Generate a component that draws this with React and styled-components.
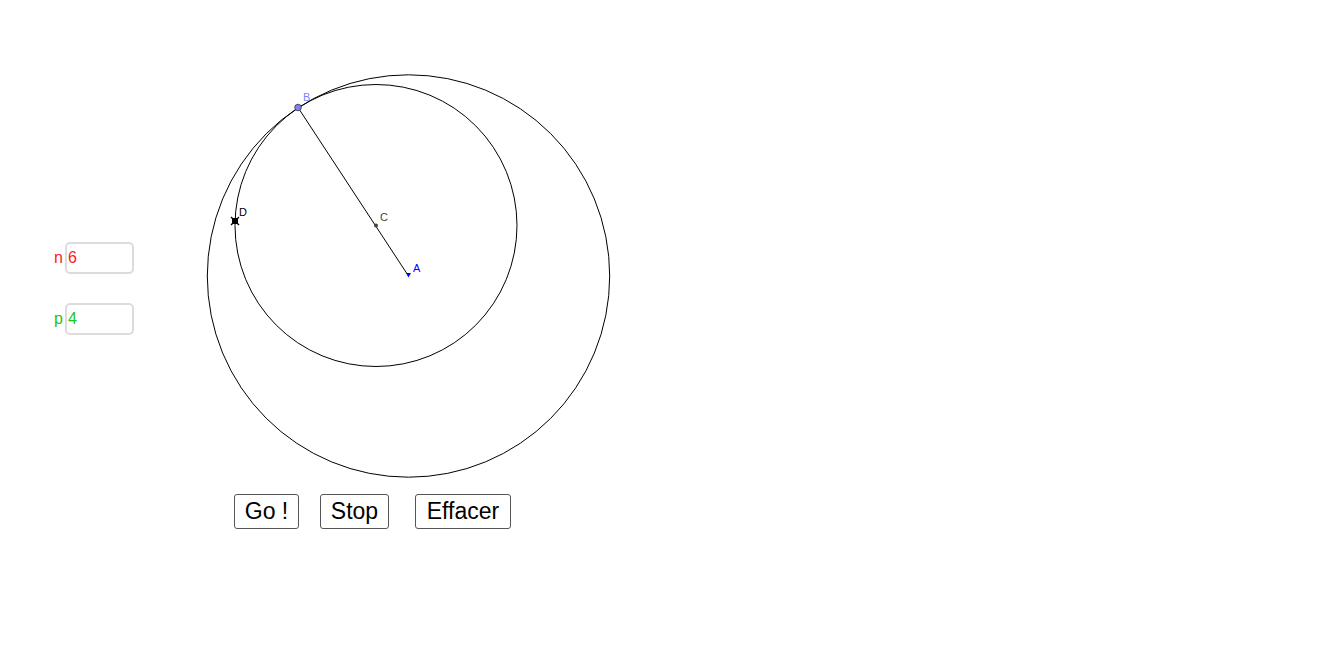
import React from 'react';
import styled, { createGlobalStyle } from 'styled-components';

const Global = createGlobalStyle`
  html, body { margin: 0; padding: 0; background: #fff; }
  body { font-family: "Liberation Sans", Arial, sans-serif; }
`;

const Canvas = styled.div`
  position: relative;
  width: 1317px;
  height: 647px;
  overflow: hidden;
  background: #fff;
`;

// the geometry itself lives on a free canvas
const Drawing = styled.svg`
  position: absolute;
  inset: 0;
`;

const Controls = styled.div`
  position: relative;
  display: flex;
  flex-direction: column;
  padding-top: 242px;
`;

const Fields = styled.div`
  display: flex;
  flex-direction: column;
  gap: 29px;
  padding-left: 54px;
`;

const Field = styled.label`
  display: flex;
  align-items: center;
  gap: 2px;
  color: ${p => p.color};
  font-size: 16px;
`;

const Box = styled.div`
  box-sizing: border-box;
  width: 69px;
  height: 32px;
  border: 2px solid #dcdcdc;
  border-radius: 5px;
  padding: 0 1px;
  display: flex;
  align-items: center;
  font-size: 16px;
`;

const ButtonRow = styled.div`
  display: flex;
  gap: 21px;
  margin-top: 159px;
  padding-left: 234px;
`;

const Button = styled.button`
  box-sizing: border-box;
  width: ${p => p.w}px;
  height: 35px;
  padding: 0;
  margin-left: ${p => p.push || 0}px;
  background: #fff;
  border: 1px solid #555;
  border-radius: 3px;
  color: #000;
  font-family: "Liberation Sans", Arial, sans-serif;
  font-size: 23px;
`;

const Label = styled.text`
  font-family: "Liberation Sans", Arial, sans-serif;
  font-size: 11px;
`;

const A = { x: 408.5, y: 276 };
const B = { x: 298, y: 107.5 };
const C = { x: 376, y: 225.5 };

export default function App() {
  return (
    <Canvas>
      <Global />
      <Drawing width="1317" height="647" viewBox="0 0 1317 647">
        <circle cx={A.x} cy={A.y} r="201.2" fill="none" stroke="#000" strokeWidth="1" />
        <circle cx={C.x} cy={C.y} r="141" fill="none" stroke="#000" strokeWidth="1" />
        <line x1={B.x} y1={B.y} x2={A.x} y2={A.y} stroke="#000" strokeWidth="1" />
        <circle cx={C.x} cy={C.y} r="2" fill="#444" />
        <circle cx={B.x} cy={B.y} r="3.3" fill="#7f7fff" stroke="#333" strokeWidth="0.8" />
        <path d={`M${A.x - 2.5} ${A.y - 3} L${A.x + 2.5} ${A.y - 3} L${A.x} ${A.y + 1.5} Z`} fill="#0000ff" />
        <g transform="translate(235 221)">
          <rect x="-3" y="-3" width="6" height="6" fill="#000" />
          <path d="M-4 -4 L4 4 M4 -4 L-4 4" stroke="#000" strokeWidth="1.4" />
        </g>
        <Label x="303" y="101" fill="#7f7fff">B</Label>
        <Label x="380" y="221" fill="#444">C</Label>
        <Label x="239" y="216" fill="#000">D</Label>
        <Label x="413" y="272" fill="#0000ff">A</Label>
      </Drawing>

      <Controls>
        <Fields>
          <Field color="#ff1a1a">
            n
            <Box>6</Box>
          </Field>
          <Field color="#1ac81a">
            p
            <Box>4</Box>
          </Field>
        </Fields>

        <ButtonRow>
          <Button w={65}>Go !</Button>
          <Button w={69}>Stop</Button>
          <Button w={96} push={5}>Effacer</Button>
        </ButtonRow>
      </Controls>
    </Canvas>
  );
}
